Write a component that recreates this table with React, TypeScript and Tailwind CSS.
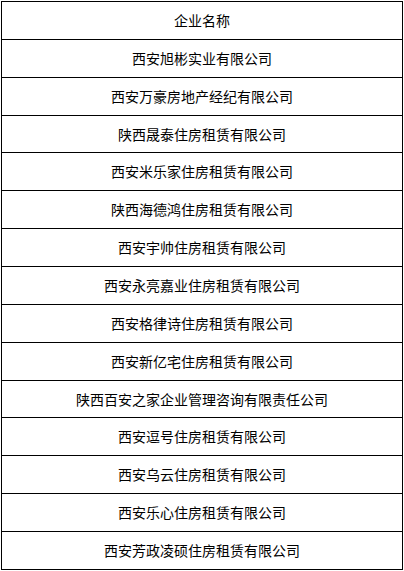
const companies = [
  "西安旭彬实业有限公司",
  "西安万豪房地产经纪有限公司",
  "陕西晟泰住房租赁有限公司",
  "西安米乐家住房租赁有限公司",
  "陕西海德鸿住房租赁有限公司",
  "西安宇帅住房租赁有限公司",
  "西安永亮嘉业住房租赁有限公司",
  "西安格律诗住房租赁有限公司",
  "西安新亿宅住房租赁有限公司",
  "陕西百安之家企业管理咨询有限责任公司",
  "西安逗号住房租赁有限公司",
  "西安乌云住房租赁有限公司",
  "西安乐心住房租赁有限公司",
  "西安芳政凌硕住房租赁有限公司",
];

const App = () => {
  return (
    <div className="bg-white w-[404px] h-[571px] overflow-hidden pt-px pl-px">
      <table
        className="w-[402px] border-collapse text-[14px] text-black"
        style={{ fontFamily: '"Noto Sans CJK SC", "Noto Sans", sans-serif' }}
      >
        <thead>
          <tr className="h-[37.87px]">
            <th className="border border-black font-normal text-center p-0">
              企业名称
            </th>
          </tr>
        </thead>
        <tbody>
          {companies.map((name, index) => (
            <tr key={index} className="h-[37.87px]">
              <td className="border border-black text-center p-0">{name}</td>
            </tr>
          ))}
        </tbody>
      </table>
    </div>
  );
};

export default App;
